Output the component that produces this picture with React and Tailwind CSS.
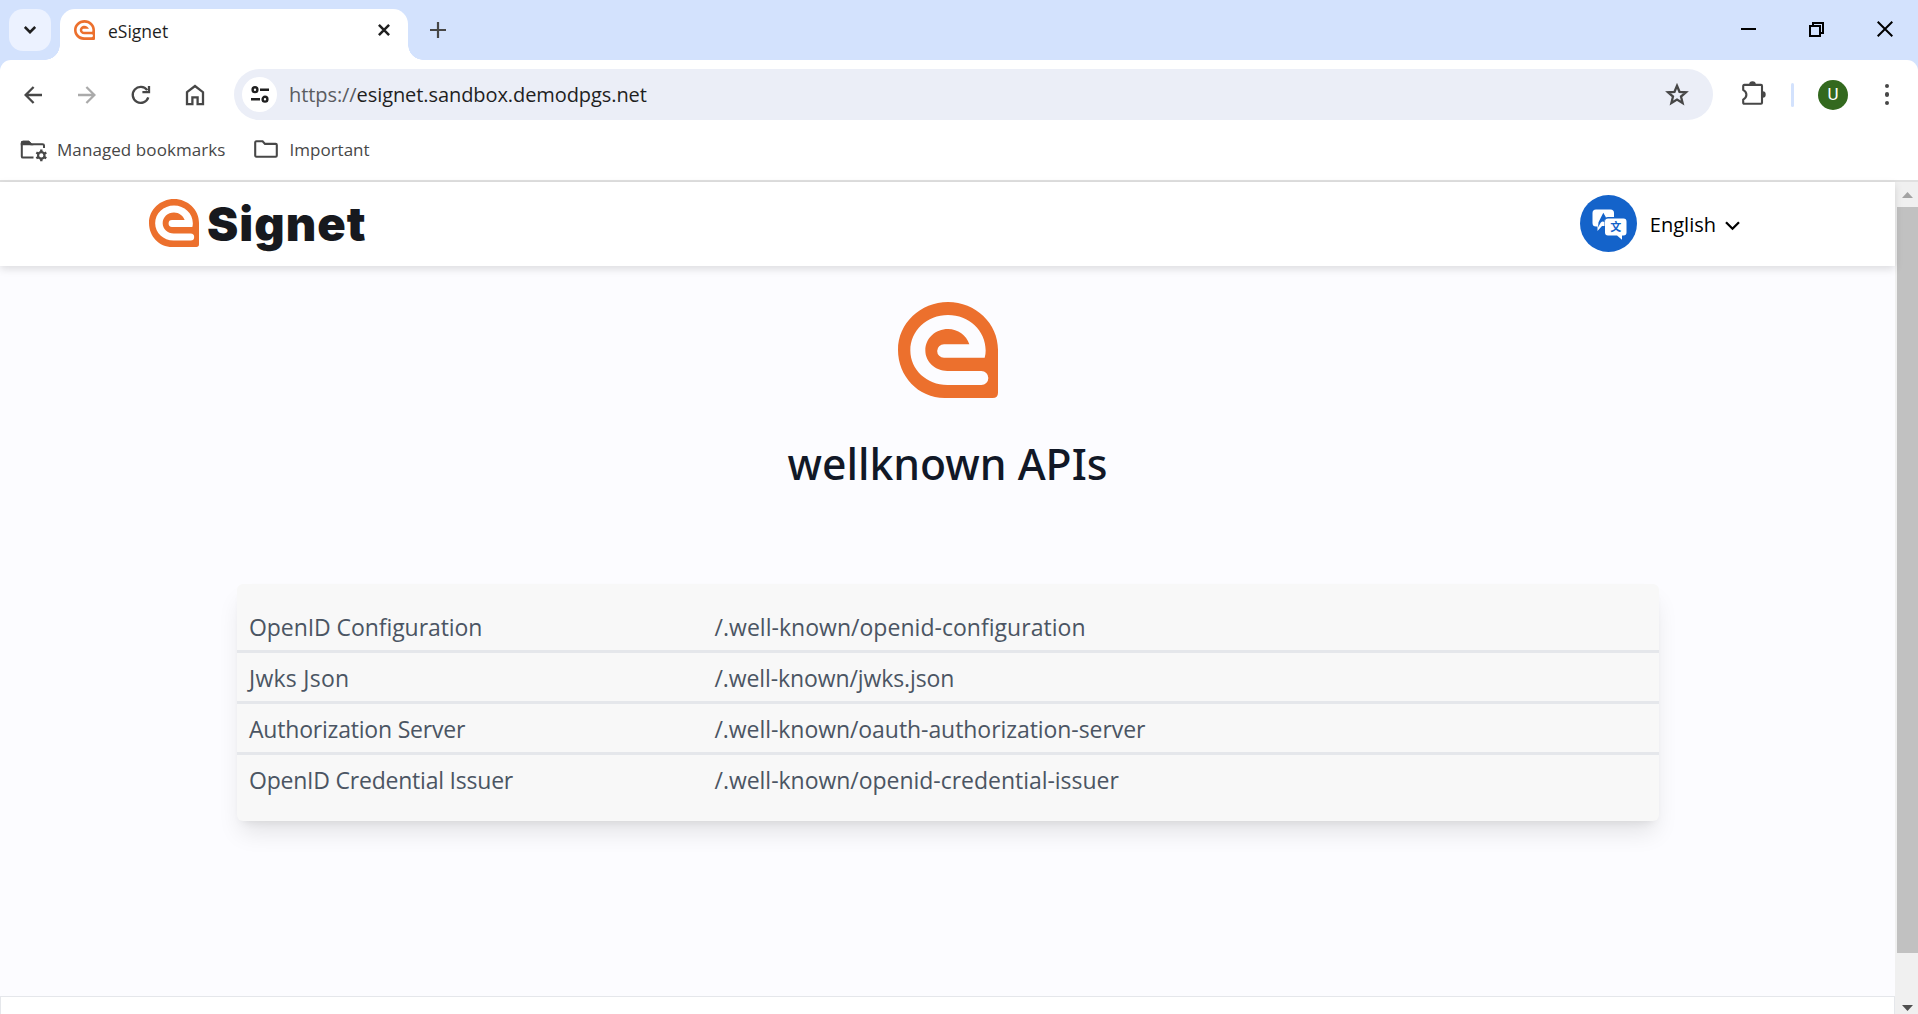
import React from "react";

const endpoints = [
  { name: "OpenID Configuration", path: "/.well-known/openid-configuration", nameCls: "tracking-[-0.07px]", pathCls: "tracking-[0.03px]" },
  { name: "Jwks Json", path: "/.well-known/jwks.json", nameCls: "tracking-[0.25px]", pathCls: "tracking-[-0.1px]" },
  { name: "Authorization Server", path: "/.well-known/oauth-authorization-server", nameCls: "tracking-[-0.2px]", pathCls: "tracking-[-0.06px]" },
  { name: "OpenID Credential Issuer", path: "/.well-known/openid-credential-issuer", nameCls: "tracking-[-0.22px]", pathCls: "tracking-[-0.03px]" },
];

function Mark({ className }) {
  return (
    <svg viewBox="0 0 300 287" preserveAspectRatio="none" className={className} fill="#ec702d" fillRule="evenodd">
      <path d="M0 143C0 64 67 0 150 0C233 0 300 64 300 143V271Q300 287 284 287H140C60 287 0 222 0 143ZM260 167Q263 157 263 145C263 86 213 39 150 39C87 39 37 86 37 145C37 202 86 248 148 248H250A21 21 0 0 0 250 206H148C112 206 82 179 82 145C82 109 112 81 150 81C180 81 205 100 214 126H138A20.5 20.5 0 0 0 138 167Z" />
    </svg>
  );
}

function Stroke({ className, width = 2, box, children }) {
  return (
    <svg viewBox={box} className={className} fill="none" stroke="currentColor" strokeWidth={width}>
      {children}
    </svg>
  );
}

function TabStrip() {
  return (
    <div className="flex h-[60px] items-end bg-[#d3e2fd]">
      <div className="mb-[9px] ml-[9px] flex size-[42px] items-center justify-center rounded-[14px] bg-[#ecf2ff] text-[#1f1f1f]">
        <Stroke box="0 0 12 8" width={2.6} className="h-2 w-3">
          <path d="M0.8 1L6 6.2L11.2 1" />
        </Stroke>
      </div>
      <div className="-ml-[6px] size-[15px] bg-[radial-gradient(circle_at_0_0,transparent_14.5px,white_15px)]" />
      <div className="flex h-[51px] w-[348px] items-center rounded-t-[15px] bg-white pb-2 pl-[14px] pr-[18px]">
        <Mark className="mb-px h-5 w-[21px]" />
        <span className="ml-[13px] mt-[2px] text-[17.5px] leading-none text-[#1f1f1f]">eSignet</span>
        <Stroke box="0 0 12 12" width={2.5} className="mb-px ml-auto size-3 text-[#1f1f1f]">
          <path d="M0.9 0.9L11.1 11.1M11.1 0.9L0.9 11.1" />
        </Stroke>
      </div>
      <div className="size-[15px] bg-[radial-gradient(circle_at_100%_0,transparent_14.5px,white_15px)]" />
      <Stroke box="0 0 16 16" width={2.2} className="mb-[22px] ml-[7px] size-4 text-[#474747]">
        <path d="M8 0V16M0 8H16" />
      </Stroke>
      <div className="mb-[23px] ml-auto mr-[25px] flex items-center gap-[53px] text-black">
        <Stroke box="0 0 15 15" className="size-[15px]">
          <path d="M0 7H15" />
        </Stroke>
        <Stroke box="0 0 15 15" className="size-[15px]">
          <path d="M1 4H11V14H1ZM4 4V1H14V11H11" />
        </Stroke>
        <Stroke box="0 0 16 16" className="size-4">
          <path d="M0.7 0.7L15.3 15.3M15.3 0.7L0.7 15.3" />
        </Stroke>
      </div>
    </div>
  );
}

function Toolbar() {
  return (
    <div className="flex h-[69px] items-center text-[#474747]">
      <Stroke box="0 0 18 18" width={2.3} className="ml-6 size-[18px]">
        <path d="M18 9H2M9.6 1L1.6 9L9.6 17" />
      </Stroke>
      <Stroke box="0 0 18 18" width={2.3} className="ml-9 size-[18px] text-[#aaaaaa]">
        <path d="M0 9H16M8.4 1L16.4 9L8.4 17" />
      </Stroke>
      <Stroke box="0 0 20 20" width={2.3} className="ml-[35px] size-5">
        <path d="M16.2 5.1A8 8 0 1 0 17.3 12.4M18 1V7.2H11.4" />
      </Stroke>
      <Stroke box="0 0 20 22" width={2.3} className="ml-[34px] h-[22px] w-5">
        <path d="M2 8.2L10 2L18 8.2V20.2H12.6V13.4H7.4V20.2H2Z" />
      </Stroke>
      <div className="ml-[29px] flex h-[51px] w-[1479px] items-center rounded-full bg-[#ebeef7] pl-2 pr-6">
        <div className="flex size-[35px] items-center justify-center rounded-full bg-white text-[#1f1f1f]">
          <Stroke box="0 0 18 17" width={2.4} className="h-[17px] w-[18px]">
            <circle cx="4" cy="3.7" r="2.4" />
            <circle cx="14" cy="13.2" r="2.4" />
            <path d="M9 3.7H18M0 13.2H9" />
          </Stroke>
        </div>
        <span className="ml-3 text-[20px] leading-none tracking-[-0.08px] text-[#1f1f1f]">
          <span className="text-[#5a5c61]">https://</span>esignet.sandbox.demodpgs.net
        </span>
        <Stroke box="0 0 24 23" width={2.3} className="ml-auto h-[23px] w-6">
          <path d="M12 2.8L14.5 8.8L21 9.3L16 13.5L17.6 20L12 16.5L6.4 20L8 13.5L3 9.3L9.5 8.8Z" />
        </Stroke>
      </div>
      <svg viewBox="0 0 24 24" className="-mt-[3px] ml-[29px] size-6">
        <path
          d="M2.2 3.9H19Q20 3.9 20 4.9V21.7Q20 22.7 19 22.7H2.2Q1.2 22.7 1.2 21.7V18.6Q4.4 16.6 4.4 13.7Q4.4 10.8 1.2 8.8V4.9Q1.2 3.9 2.2 3.9Z"
          fill="none"
          stroke="currentColor"
          strokeWidth="2.1"
        />
        <path d="M7.2 3.2A3.3 2.9 0 0 1 13.8 3.2ZM20.8 10.3A2.9 3.2 0 0 1 20.8 16.7Z" fill="currentColor" />
      </svg>
      <div className="ml-[25px] h-6 w-[3px] rounded-full bg-[#d3e2fd]" />
      <div className="ml-6 flex size-[30px] items-center justify-center rounded-full bg-[#33691e] font-[Roboto] text-[17px] text-white">U</div>
      <div className="ml-[37px] flex flex-col gap-1">
        <div className="size-[4.3px] rounded-full bg-[#474747]" />
        <div className="size-[4.3px] rounded-full bg-[#474747]" />
        <div className="size-[4.3px] rounded-full bg-[#474747]" />
      </div>
    </div>
  );
}

function BookmarksBar() {
  return (
    <div className="flex h-[51px] items-start pt-[11px] text-[17px] leading-none text-[#474747]">
      <svg viewBox="0 0 27 22" className="ml-5 h-[22px] w-[27px]" fill="none" stroke="currentColor" strokeWidth="2">
        <path d="M13.5 17.6H3Q1.8 17.6 1.8 16.4V3Q1.8 1.8 3 1.8H8.5L11 4.2H22.5Q24 4.2 24 5.6V8" />
        <path d="M1.8 4.2V3Q1.8 1.8 3 1.8H8.5L11 4.2Z" fill="currentColor" />
        <circle cx="21.3" cy="15.4" r="3.2" strokeWidth="2.2" />
        <path d="M21.3 9.6V12M21.3 18.8V21.2M16.3 12.5L18.4 13.7M24.2 17.1L26.3 18.3M26.3 12.5L24.2 13.7M18.4 17.1L16.3 18.3" strokeWidth="2.4" />
      </svg>
      <span className="ml-[10px] mt-px tracking-[0.08px]">Managed bookmarks</span>
      <Stroke box="0 0 24 18" width={2.1} className="ml-7 h-[18px] w-6">
        <path d="M2.4 1.2H8.6L11 3.9H21.6Q22.8 3.9 22.8 5.1V15.6Q22.8 16.8 21.6 16.8H2.4Q1.2 16.8 1.2 15.6V2.4Q1.2 1.2 2.4 1.2Z" />
      </Stroke>
      <span className="ml-3 mt-px">Important</span>
    </div>
  );
}

function LanguageIcon() {
  return (
    <svg viewBox="0 0 57 57" className="-mt-px size-[57px]">
      <circle cx="28.5" cy="28.5" r="28.5" fill="#1463ca" />
      <path d="M16 14.5H30.5Q34 14.5 34 18V22H28Q24.5 22 24.5 25.5V31H22L17.5 36V31.5H16Q12.5 31.5 12.5 28V18Q12.5 14.5 16 14.5Z" fill="white" />
      <path d="M18.5 27.2L23.3 17.8L26 22.4L24.5 25.2V27Q22.5 25.8 20.8 27.4L18 32.5Z" fill="#1463ca" />
      <path d="M28 23.5H43.5Q46.5 23.5 46.5 26.5V37.5Q46.5 40.5 43.5 40.5H42V44.8L37 40.5H28Q25 40.5 25 37.5V26.5Q25 23.5 28 23.5Z" fill="white" />
      <text x="35.7" y="36.2" textAnchor="middle" fill="#1463ca" className="font-['Noto_Sans_CJK_SC',sans-serif] text-[11px] font-bold">文</text>
    </svg>
  );
}

function Header() {
  return (
    <header className="z-10 flex h-[84px] shrink-0 items-center bg-white pl-[149px] pr-[155px] shadow-[0_3px_8px_rgba(0,0,0,0.13)]">
      <Mark className="-mt-[2px] h-12 w-[50px]" />
      <span className="-mt-px ml-2 font-[Inter] text-[47px] font-black leading-none tracking-[1px] text-[#17191e]">Signet</span>
      <div className="ml-auto flex items-center">
        <LanguageIcon />
        <span className="ml-[13px] mt-px text-[20px] leading-none text-black">English</span>
        <Stroke box="0 0 15 10" width={2.3} className="ml-[9px] mt-1 h-[10px] w-[15px] text-black">
          <path d="M1 1.2L7.5 7.7L14 1.2" />
        </Stroke>
      </div>
    </header>
  );
}

function Scrollbar() {
  return (
    <div className="flex w-[23px] shrink-0 flex-col items-end bg-[#f0f0f0]">
      <svg viewBox="0 0 21 25" className="h-[25px] w-[21px] shrink-0" fill="#a3a3a3">
        <path d="M5 16L10.5 10L16 16Z" />
      </svg>
      <div className="h-[746px] w-[21px] shrink-0 bg-[#c1c1c1]" />
      <svg viewBox="0 0 21 25" className="mt-auto h-[25px] w-[21px] shrink-0" fill="#505050">
        <path d="M5 16L10.5 22L16 16Z" />
      </svg>
    </div>
  );
}

export default function App() {
  return (
    <div className="flex h-[1014px] w-[1918px] flex-col overflow-hidden bg-[#d3e2fd] font-['Open_Sans','Noto_Sans',sans-serif]">
      <TabStrip />
      <div className="rounded-t-[11px] border-b-2 border-[#e0e0e0] bg-white">
        <Toolbar />
        <BookmarksBar />
      </div>
      <div className="flex min-h-0 flex-1">
        <div className="flex min-w-0 flex-1 flex-col bg-[#fcfcff]">
          <Header />
          <main className="flex flex-1 flex-col items-center">
            <Mark className="mt-9 h-24 w-[100px]" />
            <h1 className="mt-9 font-['Noto_Sans',sans-serif] text-[42.7px] font-medium leading-[60px] text-[#111827]">wellknown APIs</h1>
            <div className="mt-[90px] w-[1422px] rounded-md bg-[#f8f8f8] py-[18px] text-[23px] leading-[48px] text-[#4b5563] shadow-[0_15px_23px_-4px_rgba(0,0,0,0.1),0_6px_9px_-6px_rgba(0,0,0,0.1)]">
              {endpoints.map((e) => (
                <div key={e.name} className="flex h-[51px] border-b-[3px] border-[#e5e7eb] pl-[12.5px] pt-px last:h-12 last:border-b-0">
                  <div className="w-[465.5px] shrink-0">
                    <span className={e.nameCls}>{e.name}</span>
                  </div>
                  <span className={e.pathCls}>{e.path}</span>
                </div>
              ))}
            </div>
          </main>
          <footer className="h-[18px] shrink-0 border border-b-0 border-[#e5e7eb] bg-white" />
        </div>
        <Scrollbar />
      </div>
    </div>
  );
}
